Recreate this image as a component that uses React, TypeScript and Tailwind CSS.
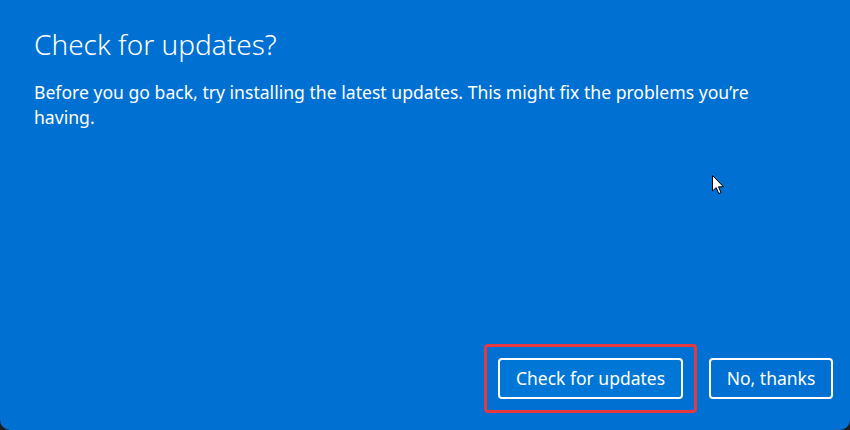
export default function App() {
  return (
    <div className="h-[430px] w-[850px] bg-[#1c1c1c] font-['Noto_Sans',sans-serif]">
      <div className="relative flex h-full flex-col rounded-b-[10px] bg-[#0070d3] text-white">
        {/* Header */}
        <div className="px-[34px] pt-[24px]">
          <h1 className="text-[28px] font-light leading-[40px]">Check for updates?</h1>
          <p className="mt-[16px] w-[740px] text-[17.6px] leading-[25px]">
            Before you go back, try installing the latest updates. This might fix the problems you’re having.
          </p>
        </div>

        {/* Cursor */}
        <svg className="absolute left-[712px] top-[175px]" width="13" height="20" viewBox="0 0 13 20">
          <path d="M0.5 0.5 L0.5 16 L4.2 12.6 L6.8 18.6 L9 17.6 L6.5 11.8 L11.5 11.8 Z" fill="white" stroke="black" strokeWidth="1" strokeLinejoin="round" />
        </svg>

        {/* Actions */}
        <div className="mt-auto flex items-center justify-end gap-[12px] pb-[17px] pr-[17px]">
          <div className="rounded-[4px] border-[3px] border-[#e5383f] p-[11px]">
            <button className="h-[41px] w-[185px] rounded-[4px] border-2 border-white bg-[#0077d6] text-[17.5px] leading-none">
              Check for updates
            </button>
          </div>
          <button className="h-[41px] w-[124px] rounded-[4px] border-2 border-white text-[17.5px] leading-none">
            No, thanks
          </button>
        </div>
      </div>
    </div>
  );
}
